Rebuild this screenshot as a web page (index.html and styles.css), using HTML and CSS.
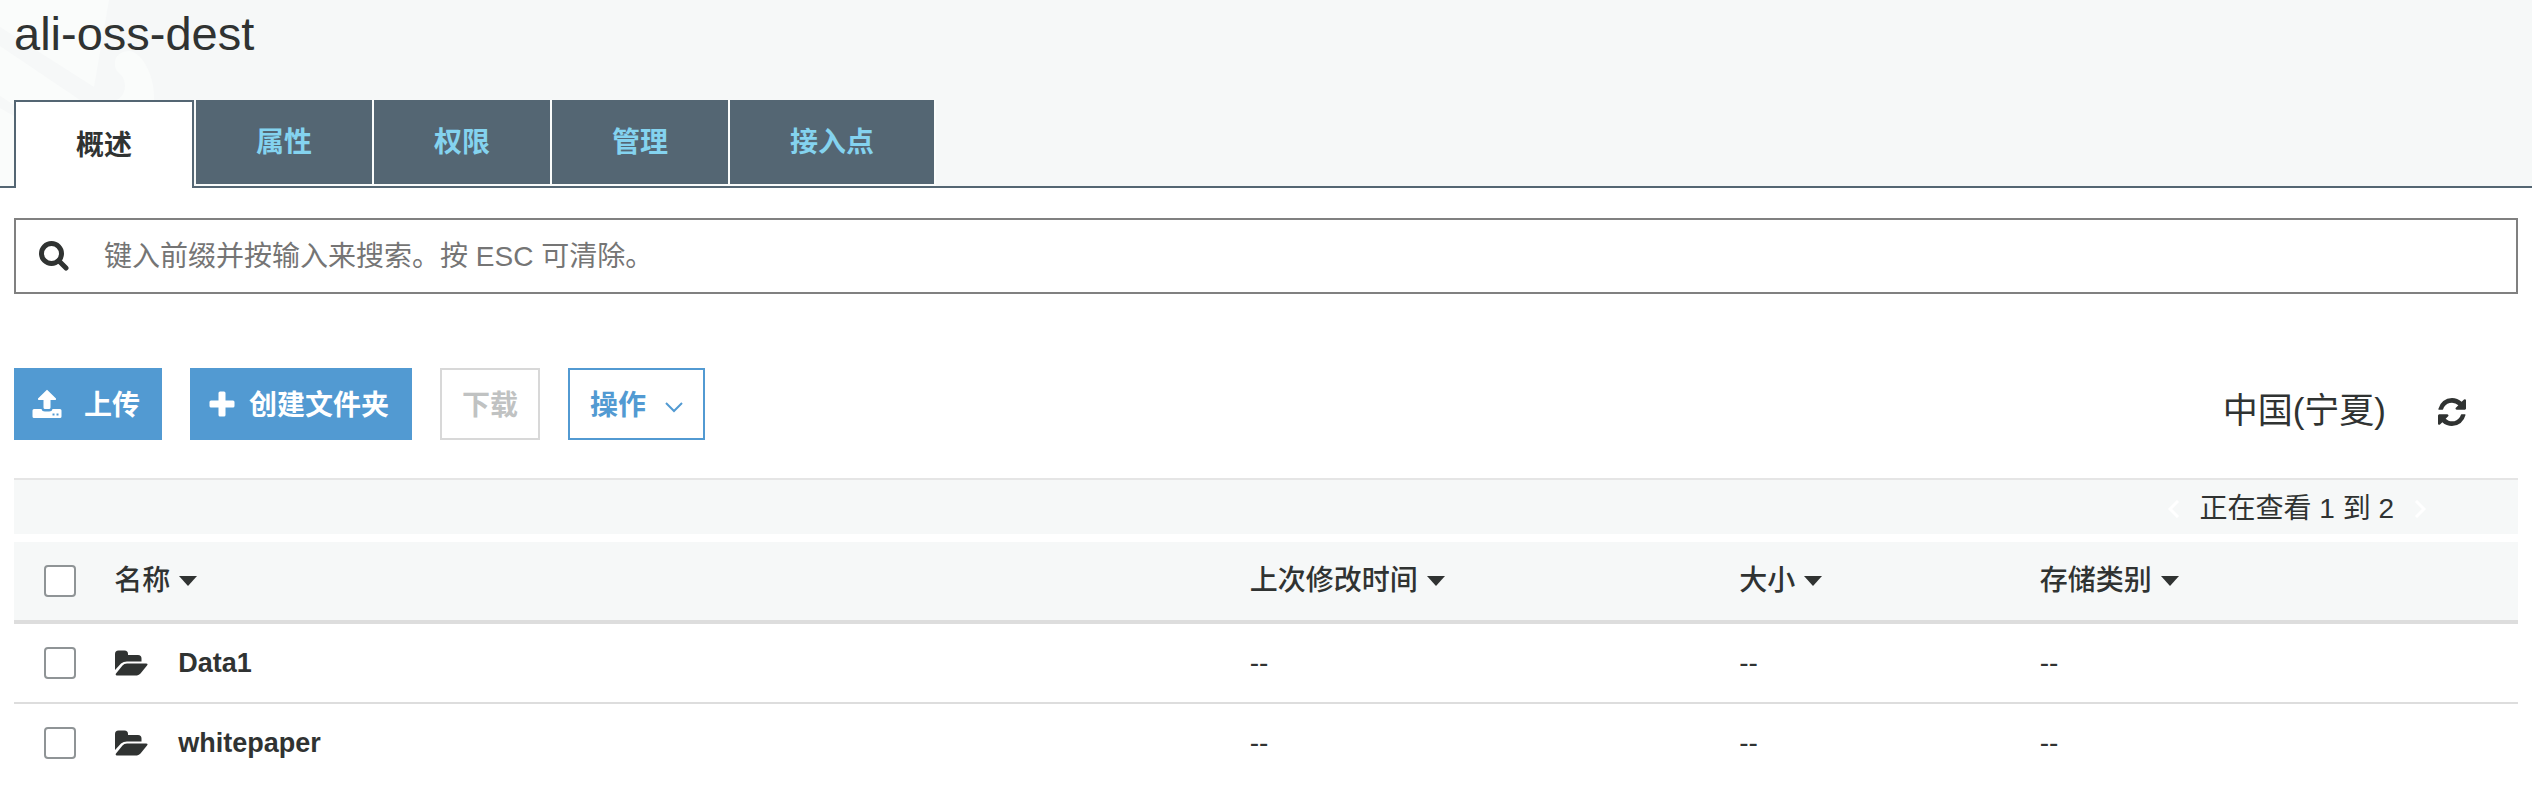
FILE: index.html
```html
<!DOCTYPE html>
<html lang="zh-CN">
<head>
<meta charset="utf-8">
<meta name="viewport" content="width=device-width, initial-scale=1">
<title>ali-oss-dest</title>
<link rel="stylesheet" href="styles.css">
</head>
<body>
<header class="header">
  <svg class="header-art" width="180" height="186" viewBox="0 0 180 186" aria-hidden="true">
    <path fill="#fafcfb" d="M0 0H109L94 87L0 27ZM0 46L80 100H14V105L0 96ZM0 108L14 116V186H0ZM115 65C114 55 122 51 130 51C144 54 155 78 154 100H117C126 95 127 84 122 76C118 72 115 70 115 65Z"/>
  </svg>
  <h1 class="title">ali-oss-dest</h1>
  <nav class="tabs" role="tablist">
    <button class="tab tab-active" role="tab" aria-selected="true">概述</button>
    <button class="tab" role="tab" aria-selected="false">属性</button>
    <button class="tab" role="tab" aria-selected="false">权限</button>
    <button class="tab" role="tab" aria-selected="false">管理</button>
    <button class="tab" role="tab" aria-selected="false">接入点</button>
  </nav>
</header>
<main class="main">
  <div class="search">
    <label class="search-icon" for="prefix" aria-label="搜索">
      <svg width="30" height="30" viewBox="0 0 30 30" fill="none" stroke="#303332" aria-hidden="true"><circle cx="12.500" cy="12.500" r="10" stroke-width="5"/><path d="M20 20L27 27" stroke-width="5" stroke-linecap="round"/></svg>
    </label>
    <input class="search-input" id="prefix" type="text" placeholder="键入前缀并按输入来搜索。按 ESC 可清除。">
  </div>

  <div class="toolbar">
    <button class="btn btn-primary btn-upload">
      <svg width="30" height="30" viewBox="0 0 30 30" fill="currentColor" aria-hidden="true"><path d="M14.700 1Q15 .7 15.300 1L24 9.500Q24.500 11 23 11H18.500V18.500Q18.500 20 17 20H13Q11.500 20 11.500 18.500V11H7Q5.500 11 6 9.500Z"/><path fill-rule="evenodd" d="M2 20H9.500Q10 22.500 13 22.500H17Q20 22.500 20.500 20H28Q29.500 20 29.500 21.500V27.500Q29.500 29 28 29H2Q.5 29 .5 27.500V21.500Q.5 20 2 20ZM20.500 24.500V26.500H22.500V24.500ZM24.500 24.500V26.500H26.500V24.500Z"/></svg>
      <span class="btn-label">上传</span>
    </button>
    <button class="btn btn-primary btn-create">
      <svg width="26" height="26" viewBox="0 0 26 26" fill="currentColor" aria-hidden="true"><path d="M11 .5H15Q16.500 .5 16.500 2V9.500H24Q25.500 9.500 25.500 11V15Q25.500 16.500 24 16.500H16.500V24Q16.500 25.500 15 25.500H11Q9.500 25.500 9.500 24V16.500H2Q.5 16.500 .5 15V11Q.5 9.500 2 9.500H9.500V2Q9.500 .5 11 .5Z"/></svg>
      <span class="btn-label">创建文件夹</span>
    </button>
    <button class="btn btn-disabled" disabled><span class="btn-label">下载</span></button>
    <button class="btn btn-outline" aria-haspopup="true">
      <span class="btn-label">操作</span>
      <svg class="chevron" width="18" height="12" viewBox="0 0 18 12" fill="none" stroke="currentColor" stroke-width="2" aria-hidden="true"><path d="M1 2L9 10L17 2"/></svg>
    </button>
    <span class="region">中国(宁夏)</span>
    <button class="icon-btn" aria-label="刷新">
      <svg width="28" height="28" viewBox="0 0 1536 1536" fill="#303332" aria-hidden="true"><path d="M1511 928q0 5-1 7-64 268-268 434.500T764 1536q-146 0-282.500-55T238 1324l-129 129q-19 19-45 19t-45-19-19-45V960q0-26 19-45t45-19h448q26 0 45 19t19 45-19 45l-137 137q71 66 161 102t187 36q134 0 250-65t186-179q11-17 53-117 8-23 30-23h192q13 0 22.500 9.500t9.500 22.500zM1536 128v448q0 26-19 45t-45 19h-448q-26 0-45-19t-19-45 19-45l138-138Q969 256 768 256q-134 0-250 65T332 500q-11 17-53 117-8 23-30 23H50q-13 0-22.500-9.500T18 608v-7q65-268 270-434.500T768 0q146 0 284 55.500T1297 212l130-129q19-19 45-19t45 19 19 45z"/></svg>
    </button>
  </div>

  <div class="pager">
    <button class="pager-btn" aria-label="上一页"><svg width="12" height="18" viewBox="0 0 12 18" fill="none" stroke="#fff" stroke-width="3" aria-hidden="true"><path d="M10 1L2 9L10 17"/></svg></button>
    <span class="pager-text">正在查看 1 到 2</span>
    <button class="pager-btn" aria-label="下一页"><svg width="12" height="18" viewBox="0 0 12 18" fill="none" stroke="#fff" stroke-width="3" aria-hidden="true"><path d="M2 1L10 9L2 17"/></svg></button>
  </div>

  <table class="objects">
    <colgroup><col class="col-check"><col class="col-name"><col class="col-date"><col class="col-size"><col></colgroup>
    <thead>
      <tr>
        <th class="check-cell"><input class="check" type="checkbox" aria-label="全选"></th>
        <th><span class="sort">名称<i class="caret"></i></span></th>
        <th><span class="sort">上次修改时间<i class="caret"></i></span></th>
        <th><span class="sort">大小<i class="caret"></i></span></th>
        <th><span class="sort">存储类别<i class="caret"></i></span></th>
      </tr>
    </thead>
    <tbody>
      <tr>
        <td class="check-cell"><input class="check" type="checkbox" aria-label="Data1"></td>
        <td><a class="object" href="#data1"><svg width="34" height="26" viewBox="0 0 34 26" fill="currentColor" aria-hidden="true"><path d="M1 20V4Q1 .5 4.500 .5H10.500Q14 .5 14 4V5H24Q27.500 5 27.500 8.500V11.500H13Q9.500 11.500 7 13.500Z"/><path d="M13 13.500H32Q34.500 13.500 33 15.500L26.500 23.500Q25 25 23 25.500H3Q1 25 2 23.500L8.500 15.500Q10 13.500 13 13.500Z"/></svg><span>Data1</span></a></td>
        <td>--</td><td>--</td><td>--</td>
      </tr>
      <tr>
        <td class="check-cell"><input class="check" type="checkbox" aria-label="whitepaper"></td>
        <td><a class="object" href="#whitepaper"><svg width="34" height="26" viewBox="0 0 34 26" fill="currentColor" aria-hidden="true"><path d="M1 20V4Q1 .5 4.500 .5H10.500Q14 .5 14 4V5H24Q27.500 5 27.500 8.500V11.500H13Q9.500 11.500 7 13.500Z"/><path d="M13 13.500H32Q34.500 13.500 33 15.500L26.500 23.500Q25 25 23 25.500H3Q1 25 2 23.500L8.500 15.500Q10 13.500 13 13.500Z"/></svg><span>whitepaper</span></a></td>
        <td>--</td><td>--</td><td>--</td>
      </tr>
    </tbody>
  </table>
</main>
</body>
</html>
```
FILE: styles.css
```css
* { box-sizing: border-box; }
body {
  margin: 0;
  background: #fff;
  color: #303332;
  font: 28px/40px "Liberation Sans", "Noto Sans CJK SC", sans-serif;
}
button { font: inherit; margin: 0; padding: 0; border: 0; background: none; color: inherit; }
svg { display: block; flex: none; }

.header {
  position: relative;
  background: #f6f8f8;
  border-bottom: 2px solid #546673;
  padding: 6px 14px 0;
}
.header-art { position: absolute; left: 0; top: 0; }
.title {
  position: relative;
  margin: 0 0 38px;
  font-size: 47px;
  line-height: 56px;
  font-weight: 400;
}
.tabs { position: relative; display: flex; gap: 2px; margin-bottom: -2px; }
.tab {
  height: 84px;
  padding: 2px 60px 0;
  background: #546673;
  color: #84d3ef;
  font-weight: 700;
  box-shadow: 0 0 0 2px #fafcfb;
  clip-path: inset(0 -2px -2px 0);
}
.tab-active {
  height: 88px;
  background: #fff;
  color: #303332;
  border: 2px solid #546673;
  border-bottom: 0;
  box-shadow: none;
}

.main { padding: 30px 14px 0; }
.search { display: flex; height: 76px; border: 2px solid #808080; }
.search-icon { display: flex; align-items: center; padding: 0 35px 0 23px; }
.search-input {
  flex: 1;
  min-width: 0;
  border: 0;
  padding: 2px 0 0;
  outline: 0;
  background: transparent;
  font: inherit;
  color: #303332;
}
.search-input::placeholder { color: #757575; opacity: 1; }

.toolbar { display: flex; align-items: center; margin: 74px 0 38px; }
.btn {
  display: flex;
  align-items: center;
  height: 72px;
  margin-right: 28px;
  padding: 0 20px;
  border: 2px solid #529ad2;
  font-weight: 700;
}
.btn-label { padding-top: 4px; }
.btn-primary { background: #529ad2; color: #fff; }
.btn-upload { gap: 22px; padding: 0 20px 0 16px; }
.btn-create { gap: 14px; padding: 0 21px 0 17px; }
.btn-disabled { border-color: #d8d8d8; color: #c0c2c2; }
.btn-outline { gap: 19px; color: #529ad2; }
.chevron { margin-top: 6px; }
.region { margin-left: auto; font-size: 35px; padding-top: 14px; }
.icon-btn { margin: 16px 52px 0 52px; }

.pager {
  display: flex;
  align-items: center;
  justify-content: flex-end;
  gap: 20px;
  height: 56px;
  padding: 4px 92px 0 0;
  border-top: 2px solid #e5e5e5;
  background: #f6f8f8;
}

.objects { width: 100%; margin-top: 8px; table-layout: fixed; border-collapse: separate; border-spacing: 0; }
.col-check { width: 4%; }
.col-name { width: 45.35%; }
.col-date { width: 19.55%; }
.col-size { width: 12%; }
.objects th, .objects td { padding: 0; text-align: left; vertical-align: middle; font-weight: 500; }
.objects th { height: 82px; background: #f6f8f8; border-bottom: 4px solid #ddd; }
.objects td { height: 78px; }
.objects tbody tr + tr td { height: 80px; border-top: 2px solid #ddd; }
.objects .check-cell { padding-left: 30px; }
.check {
  appearance: none;
  display: block;
  width: 32px;
  height: 32px;
  margin: 0;
  border: 2px solid #8f9496;
  border-radius: 4px;
  background: #fff;
}
.sort { display: flex; align-items: center; gap: 9px; }
.caret { border: 9px solid transparent; border-top: 10px solid #303332; border-bottom: 0; }
.object {
  display: flex;
  align-items: center;
  gap: 30px;
  color: inherit;
  text-decoration: none;
  font-size: 27px;
  font-weight: 700;
}
```
